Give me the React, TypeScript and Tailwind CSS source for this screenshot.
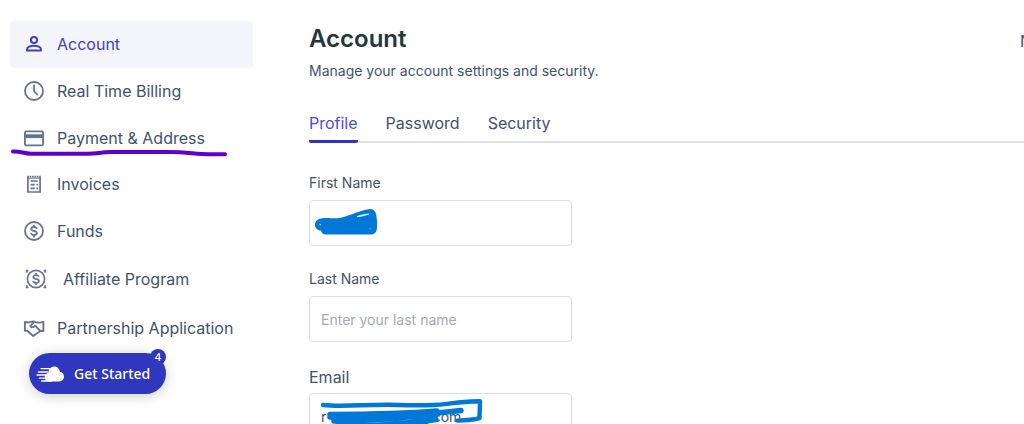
import React, { useState } from 'react'
import { clsx } from 'clsx'

type IconProps = { className?: string }

function PersonIcon({ className }: IconProps) {
  return (
    <svg className={className} viewBox="0 0 22 22" fill="none" stroke="currentColor" strokeWidth="2">
      <circle cx="11" cy="7" r="3.1" />
      <path d="M4 17.6v-1.4c0-2 3.6-3.5 7-3.5s7 1.5 7 3.5v1.4z" strokeLinejoin="round" />
    </svg>
  )
}

function ClockIcon({ className }: IconProps) {
  return (
    <svg className={className} viewBox="0 0 22 22" fill="none" stroke="currentColor" strokeWidth="1.8" strokeLinecap="round">
      <circle cx="11" cy="11" r="9" />
      <path d="M11 5.5V11l3.2 3.6" />
    </svg>
  )
}

function CardIcon({ className }: IconProps) {
  return (
    <svg className={className} viewBox="0 0 22 22" fill="none" stroke="currentColor" strokeWidth="1.8">
      <rect x="1.9" y="4.4" width="18.2" height="14" rx="1.4" />
      <path d="M2 9.2h18" strokeWidth="3.8" />
    </svg>
  )
}

function InvoiceIcon({ className }: IconProps) {
  return (
    <svg className={className} viewBox="0 0 22 22" fill="none" stroke="currentColor" strokeWidth="1.7">
      <path d="M4.9 4v15h12.2V4" />
      <path d="M4.2 3.6h13.6" strokeWidth="1.8" strokeDasharray="1.7 .7" />
      <path d="M4.9 5.2h12.2" strokeWidth="1" />
      <path d="M7.5 8h7.2M7.5 11.7h4.2M13.4 11.7h1.6M7.5 15.4h4.2M13.4 15.4h1.6" />
    </svg>
  )
}

function DollarIcon({ className }: IconProps) {
  return (
    <svg className={className} viewBox="0 0 22 22" fill="none" stroke="currentColor" strokeWidth="1.8">
      <circle cx="11" cy="11" r="9" />
      <path d="M13.8 8.8c-.2-1.2-1.2-1.8-2.8-1.8s-2.7.7-2.7 1.9c0 2.8 5.6 1.3 5.6 4.2 0 1.2-1.1 1.9-2.8 1.9s-2.8-.7-2.9-2M11 4.8v2M11 15v2.400" />
    </svg>
  )
}

function AffiliateIcon({ className }: IconProps) {
  return (
    <svg className={className} viewBox="0 0 22 22" fill="none" stroke="currentColor" strokeWidth="1.7">
      <circle cx="11" cy="11" r="8.6" />
      <path d="M13.8 8.9c-.2-1.2-1.2-1.8-2.8-1.8s-2.7.7-2.7 1.900c0 2.700 5.600 1.200 5.600 4 0 1.200-1.100 1.900-2.800 1.900s-2.800-.7-2.900-2M11 5v2M11 14.900v2.200" />
      <path d="M.8 1.800h2.600v1.800H2.600v1.200H.8zM18.600 1.800h2.600v3h-1.800V3.600h-.8zM21.200 17.200v3h-2.600v-1.800h.8v-1.200zM.8 20.200v-3h1.800v1.200h.8v1.800z" fill="currentColor" stroke="none" />
    </svg>
  )
}

function HandshakeIcon({ className }: IconProps) {
  return (
    <svg className={className} viewBox="0 0 22 22" fill="none" stroke="currentColor" strokeWidth="1.9" strokeLinejoin="round">
      <path d="M1.9 5c2.800.8 4.600.6 6.700-.3 1.600-.6 2.800-.4 4.200.4 2.500.8 4.800.7 7.600-.2v9.100h-3l-7.200 5-6-5.300H1.900z" />
      <path d="M11 5 7.400 8.900c.6 2 2.900 1.800 4.700-.2l5.300 5.300" />
    </svg>
  )
}

function CloudIcon({ className }: IconProps) {
  return (
    <svg className={className} viewBox="0 0 28 18" fill="none" stroke="currentColor" strokeWidth="1.3" strokeLinecap="round">
      <path d="M5 3.7h9M2.4 7h9M1 10h9M3.4 13.2h8M5.6 16h10" />
      <path
        d="M13 16.500c-2.700 0-4.300-1.900-4.300-4.200 0-2.300 1.600-4 3.500-4.300.3-3.800 2.800-6.500 6-6.500 3.100 0 5.200 2.200 5.600 5.200 2.500.3 4.200 2.400 4.200 4.900 0 2.800-2 4.900-4.600 4.900z"
        fill="currentColor"
        stroke="none"
      />
    </svg>
  )
}

const navItems = [
  { label: 'Account', icon: PersonIcon, row: 'h-[47px]' },
  { label: 'Real Time Billing', icon: ClockIcon, row: 'h-[47px]' },
  { label: 'Payment & Address', icon: CardIcon, row: 'h-[47px]', marked: true },
  { label: 'Invoices', icon: InvoiceIcon, row: 'h-[46px]' },
  { label: 'Funds', icon: DollarIcon, row: 'h-[47px]' },
  { label: 'Affiliate Program', icon: AffiliateIcon, row: 'h-[49px]', indent: true },
  { label: 'Partnership Application', icon: HandshakeIcon, row: 'h-[49px]' },
]

const tabs = ['Profile', 'Password', 'Security']

function Sidebar() {
  return (
    <aside className="w-[243px] shrink-0">
      <nav>
        {navItems.map(({ label, icon: Icon, row, marked, indent }, i) => (
          <a
            key={label}
            href="#"
            className={clsx(
              'relative flex items-center rounded pb-0.5',
              row,
              i === 0 ? 'bg-[#f4f5fb] text-[#3d40c6]' : 'text-[#42526b]',
              indent ? 'gap-4 pl-[15px]' : 'gap-3 pl-[13px]'
            )}
          >
            <Icon className={clsx('size-[22px] shrink-0', i !== 0 && 'text-[#66758f]')} />
            <span className="whitespace-nowrap">{label}</span>
            {/* Highlighter stroke */}
            {marked && (
              <svg className="absolute top-[34px] left-0 h-3 w-[218px]" viewBox="0 0 218 12" fill="none">
                <path
                  d="M3 2.5c7-.5 11 2.200 18 2.200h57c9 0 13-1.600 22-1.600h60c16 0 26 2 38 2.100h17"
                  stroke="#6200c8"
                  strokeWidth="4"
                  strokeLinecap="round"
                />
              </svg>
            )}
          </a>
        ))}
      </nav>

      <button className="relative ml-[19px] flex h-[41px] w-[137px] items-center gap-[10px] rounded-full bg-[#2f37bf] pl-[7px] font-['Noto_Sans',sans-serif] text-sm font-medium whitespace-nowrap text-white shadow-[0_2px_14px_rgba(0,0,0,0.2)]">
        <CloudIcon className="h-[18px] w-7 shrink-0" />
        <span>Get Started</span>
        <span className="absolute -top-1 right-0 flex size-4 items-center justify-center rounded-full bg-[#2f37bf] text-[11px]">4</span>
      </button>
    </aside>
  )
}

const inputClass =
  'h-[46px] w-full rounded border border-[#dcdde5] bg-white px-[11px] text-sm text-[#42526b] outline-none placeholder:text-[#a3abb9]'

export default function App() {
  const [activeTab, setActiveTab] = useState('Profile')

  return (
    <div className="flex h-screen overflow-hidden bg-white pt-[21px] pl-[10px] font-['Inter',sans-serif] text-base text-[#42526b]">
      <Sidebar />

      <main className="ml-14 min-w-0 flex-1">
        <header className="flex h-9 items-center justify-between">
          <h1 className="text-2xl font-semibold text-[#263640]">Account</h1>
          <span className="w-1 overflow-hidden pt-1 whitespace-nowrap">N</span>
        </header>
        <p className="mt-1 text-sm leading-5">Manage your account settings and security.</p>

        {/* Tabs */}
        <div className="mt-5 flex h-[42px] gap-7 border-b-2 border-[#dfe0e8]" role="tablist">
          {tabs.map(tab => (
            <button
              key={tab}
              role="tab"
              aria-selected={activeTab === tab}
              onClick={() => setActiveTab(tab)}
              className={clsx(
                '-mb-[2px] border-b-3 pt-1',
                activeTab === tab ? 'rounded-b-xs border-[#2f37bf] text-[#4a4de0]' : 'border-transparent'
              )}
            >
              {tab}
            </button>
          ))}
        </div>

        {/* Profile form */}
        <form className="mt-[30px] w-[263px]">
          <div className="mb-[23px]">
            <label htmlFor="first-name" className="mb-[7px] block text-sm leading-5 text-[#48525f]">First Name</label>
            <div className="relative">
              <input id="first-name" type="text" className={inputClass} />
              <svg className="pointer-events-none absolute top-2 left-[5px] h-7 w-16" viewBox="0 0 64 28">
                <path
                  d="M5 11C11 9 16 10.500 24 10.200 34 9 43 3 55 1.200c5-.7 7 3 7.500 7.300.7 4 .8 9 .3 13-.6 3.500-2.800 5-6.800 5H12c-3.500 0-4.200-1.700-5-4C-.5 22-.8 13 5 11z"
                  fill="#0078d8"
                />
                <path d="M43 8.600c4-.1 8-1 12-2.600-3.700.1-8 .8-12 2.600z" fill="#fff" stroke="#fff" strokeWidth=".6" />
                <circle cx="6.300" cy="16.500" r=".8" fill="#d8ecfb" />
                <circle cx="56" cy="20.500" r=".7" fill="#6db3ea" />
              </svg>
            </div>
          </div>

          <div className="mb-[23px]">
            <label htmlFor="last-name" className="mb-[7px] block text-sm leading-5 text-[#48525f]">Last Name</label>
            <input id="last-name" type="text" placeholder="Enter your last name" className={inputClass} />
          </div>

          <div>
            <label htmlFor="email" className="mb-1 block text-base leading-6">Email</label>
            <div className="relative">
              <input
                id="email"
                type="text"
                defaultValue={'r' + '\u00a0'.repeat(26) + '.com'}
                className={inputClass}
              />
              <svg className="pointer-events-none absolute top-[5px] left-[11px] h-[30px] w-[164px]" viewBox="0 0 164 30" fill="none" stroke="#0078d8" strokeLinecap="round" strokeLinejoin="round">
                <path d="M3 7c20 2 40-.5 65-.3 30 .8 48 1.200 65-1.500 9-1.500 18-1.800 27-2l-.5 17c-6 1.600-14 2.200-22 2.400" strokeWidth="4.400" />
                <path d="M10 16.500c35-.2 70-.5 107-3.500M10 19c45 0 75-.5 131-6.500M14 23c35 1 60-3 103-6.500M18 28c25 1 55-1 98-6.500M30 30c30 0 50 0 76-3" strokeWidth="5.500" />
              </svg>
            </div>
          </div>
        </form>
      </main>
    </div>
  )
}
